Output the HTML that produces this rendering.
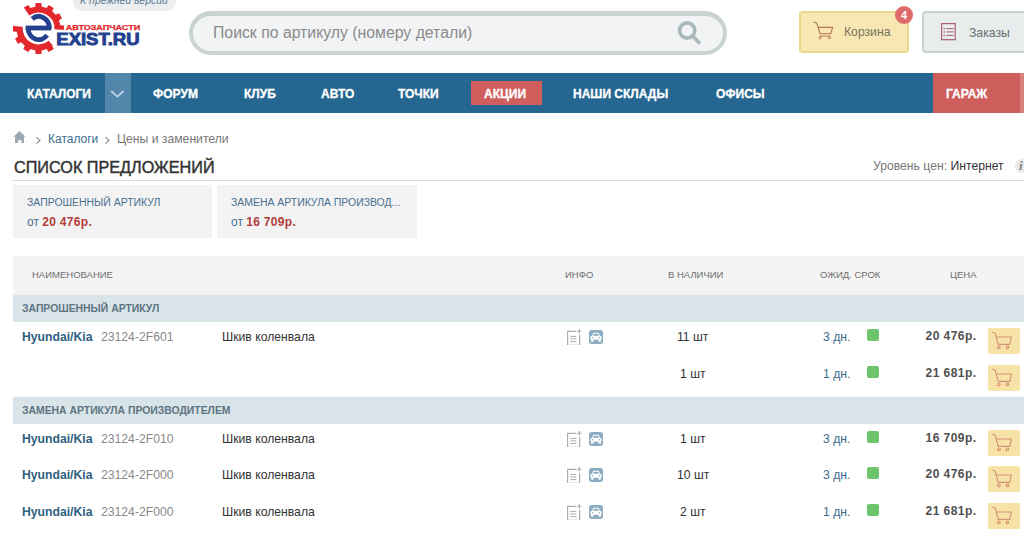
<!DOCTYPE html>
<html><head><meta charset="utf-8">
<style>
*{box-sizing:border-box;margin:0;padding:0}
html,body{width:1024px;height:550px;overflow:hidden;background:#fff;font-family:"Liberation Sans",sans-serif;position:relative}
.a{position:absolute;white-space:nowrap}
.nav{position:absolute;left:0;top:73px;width:1024px;height:40px;background:#256791}
.ni{position:absolute;top:0.5px;height:40px;line-height:40px;color:#fff;font-weight:bold;font-size:12px;-webkit-text-stroke:0.3px #fff}
.t13{font-size:13px}
.sec{position:absolute;left:13px;width:1011px;height:26.5px;background:#d9e4e8;color:#5d7482;font-weight:bold;font-size:10.4px;line-height:27px;padding-left:9px}
.brand{color:#2f5f80;font-weight:bold;font-size:12.2px}
.code{color:#888;font-size:12.2px}
.name{color:#333;font-size:12.2px}
.qty{color:#333;font-size:12.2px}
.days{color:#3d6a88;font-size:12.2px}
.gsq{position:absolute;width:12px;height:12px;background:#6cc46c;border-radius:2px}
.price{color:#505050;font-weight:bold;font-size:12px;letter-spacing:0.45px}
.cbtn{position:absolute;left:988px;width:32px;height:26px;background:#f8e3a6;border-radius:2px}
.th{color:#6e6e6e;font-size:9.5px}
</style></head><body>

<!-- old version pill -->
<div class="a" style="left:73px;top:-3px;width:103px;height:14px;background:#eceeef;border-radius:0 0 9px 9px"></div>
<div class="a" id="old" style="left:80px;top:-6px;font-size:10.5px;font-style:italic;color:#5f7f98">К прежней версии</div>

<!-- logo -->
<svg class="a" style="left:0;top:0" width="150" height="60" viewBox="0 0 150 60">
  <path d="M25.88 10.48 L23.82 7.53 L28.29 5.02 L30.44 8.03 A22.00 22.00 0 0 1 35.25 6.74 L35.60 3.06 L41.40 3.06 L41.75 6.74 A22.00 22.00 0 0 1 46.56 8.03 L48.71 5.02 L53.73 7.92 L52.20 11.28 A22.00 22.00 0 0 1 55.72 14.80 L59.08 13.27 L61.98 18.29 L58.97 20.44 A22.00 22.00 0 0 1 60.26 25.25 L63.94 25.60 L64.06 29.84 L60.47 29.65 L54.38 29.33 A15.90 15.90 0 0 0 29.38 15.48 Z M52.64 45.35 A22.00 22.00 0 0 1 52.20 45.72 L53.73 49.08 L48.71 51.98 L46.56 48.97 A22.00 22.00 0 0 1 41.75 50.26 L41.40 53.94 L35.60 53.94 L35.25 50.26 A22.00 22.00 0 0 1 30.44 48.97 L28.29 51.98 L23.27 49.08 L24.80 45.72 A22.00 22.00 0 0 1 21.28 42.20 L17.92 43.73 L15.02 38.71 L18.03 36.56 A22.00 22.00 0 0 1 16.74 31.75 L13.06 31.40 L13.04 25.82 L16.62 26.20 L22.69 26.84 A15.90 15.90 0 0 0 48.72 40.68 Z" fill="#e4262d"/>
  <path d="M32.17 18.86 A10.6 11.6 0 0 1 49.30 28.00 M28.10 28.00 A10.6 11.6 0 0 0 47.05 35.14" fill="none" stroke="#23418e" stroke-width="4.8"/>
  <rect x="25.6" y="25.6" width="25.8" height="4.8" fill="#23418e"/>
  <text x="65.7" y="29.9" font-family="Liberation Sans" font-weight="bold" font-size="7" fill="#e4262d" stroke="#e4262d" stroke-width="0.25" textLength="74.5" lengthAdjust="spacingAndGlyphs">АВТОЗАПЧАСТИ</text>
  <text x="56.3" y="44.7" font-family="Liberation Sans" font-weight="bold" font-size="17" fill="#23418e" stroke="#23418e" stroke-width="0.9" textLength="83.3" lengthAdjust="spacingAndGlyphs">EXIST.RU</text>
</svg>

<!-- search -->
<div class="a" style="left:189px;top:11px;width:538px;height:44px;border:4px solid #c9d3d2;border-top-width:5px;border-radius:22px;background:#f2f3f5"></div>
<div class="a" id="srch" style="left:213px;top:24.3px;font-size:15.8px;color:#8a8a8a">Поиск по артикулу (номеру детали)</div>
<svg class="a" style="left:670px;top:14px" width="40" height="40" viewBox="0 0 40 40">
  <circle cx="17.2" cy="16.5" r="7.6" fill="none" stroke="#a9b9b9" stroke-width="3.6"/>
  <line x1="22.5" y1="22" x2="29" y2="28.5" stroke="#a9b9b9" stroke-width="3.6" stroke-linecap="round"/>
</svg>

<!-- cart button -->
<div class="a" style="left:799px;top:11px;width:110px;height:42px;border:2px solid #ebd78c;border-radius:4px;background:#f9e7b3"></div>
<svg class="a" style="left:812px;top:20px" width="24" height="22" viewBox="0 0 24 22">
  <path d="M2.1 2.4 Q4.4 2.2 5.1 3.9 L8.1 13.8 H18.6 L20.7 7.4 H6.4" fill="none" stroke="#b5704f" stroke-width="1.1" stroke-linejoin="round" stroke-linecap="round"/>
  <path d="M8.2 16 H17.6" stroke="#b5704f" stroke-width="0.9"/>
  <circle cx="8.1" cy="17.6" r="1.2" fill="none" stroke="#b5704f" stroke-width="0.95"/>
  <circle cx="17.4" cy="17.6" r="1.2" fill="none" stroke="#b5704f" stroke-width="0.95"/>
</svg>
<div class="a" id="korz" style="left:844px;top:25px;font-size:12.2px;color:#77735f">Корзина</div>
<div class="a" style="left:895px;top:6px;width:18px;height:18px;border-radius:50%;background:#df6a6a;color:#fff;font-weight:bold;font-size:11px;text-align:center;line-height:18px">4</div>

<!-- orders button -->
<div class="a" style="left:922px;top:11px;width:130px;height:42px;border:2px solid #c9d0d0;border-radius:4px;background:#e8eced"></div>
<svg class="a" style="left:940px;top:22px" width="18" height="19" viewBox="0 0 18 19">
  <rect x="1.6" y="1.6" width="13.6" height="16.1" fill="none" stroke="#a8616b" stroke-width="1.2"/>
  <rect x="3.6" y="6" width="1.3" height="1.3" fill="#8a5a60"/><rect x="3.6" y="9.3" width="1.3" height="1.3" fill="#8a5a60"/><rect x="3.6" y="12.8" width="1.3" height="1.3" fill="#8a5a60"/>
  <path d="M6.3 6.6H13.6M6.3 9.9H13.6M6.3 13.4H13.6" stroke="#a8616b" stroke-width="1"/>
</svg>
<div class="a" id="zak" style="left:969px;top:26px;font-size:12.2px;color:#6a6f72">Заказы</div>

<!-- nav -->
<div class="nav">
  <div class="ni" id="n1" style="left:27px">КАТАЛОГИ</div>
  <div class="a" style="left:105px;top:0;width:26px;height:40px;background:#5386ab"></div>
  <svg class="a" style="left:109.5px;top:16px" width="16" height="10" viewBox="0 0 16 10"><path d="M1.2 2 L7.4 7.6 L13.6 2" fill="none" stroke="#c0d5e7" stroke-width="1.8"/></svg>
  <div class="ni" id="n2" style="left:153px">ФОРУМ</div>
  <div class="ni" id="n3" style="left:244px">КЛУБ</div>
  <div class="ni" id="n4" style="left:321px">АВТО</div>
  <div class="ni" id="n5" style="left:398px">ТОЧКИ</div>
  <div class="a" style="left:471px;top:8px;width:71px;height:24px;background:#cf5e5d"></div>
  <div class="ni" id="n6" style="left:484px">АКЦИИ</div>
  <div class="ni" id="n7" style="left:573px">НАШИ СКЛАДЫ</div>
  <div class="ni" id="n8" style="left:716px">ОФИСЫ</div>
  <div class="a" style="left:933px;top:0;width:87px;height:40px;background:#ce5e5c"></div>
  <div class="a" style="left:1020px;top:0;width:4px;height:40px;background:#d9807c"></div>
  <div class="ni" id="n9" style="left:946px">ГАРАЖ</div>
</div>


<svg width="0" height="0" style="position:absolute">
<defs>
 <g id="doc">
  <path d="M10.3 3.3 H1.6 V17.4 H13.6 V6.8" fill="none" stroke="#acacac" stroke-width="1.2"/>
  <path d="M4.2 8.4H10.4M4.2 10.9H10.4M4.2 13.6H10.4" stroke="#acacac" stroke-width="1"/>
  <path d="M13.3 1V5.4M11.1 3.2H15.5" stroke="#acacac" stroke-width="1.1"/>
 </g>
 <g id="car">
  <rect x="0" y="0" width="14" height="14" rx="3" fill="#8aabc0"/>
  <path d="M2.9 6.5 L4.2 2.7 H9.8 L11.1 6.5 Z" fill="#fff"/>
  <path d="M4.2 5.7 L4.9 3.8 H9.1 L9.8 5.7 Z" fill="#8aabc0"/>
  <rect x="1.3" y="6" width="11.4" height="3.8" rx="1" fill="#fff"/>
  <circle cx="3.6" cy="7.8" r="0.75" fill="#8aabc0"/><circle cx="10.4" cy="7.8" r="0.75" fill="#8aabc0"/>
  <rect x="2.1" y="9.3" width="2.4" height="2.3" fill="#fff"/><rect x="9.5" y="9.3" width="2.4" height="2.3" fill="#fff"/>
 </g>
 <g id="cart">
  <path d="M4.3 4.2 Q6.6 4.2 7.3 5.6 L10.2 16.4 H21.8 L23.4 9 H8.6" fill="none" stroke="#d39176" stroke-width="1.15" stroke-linejoin="round" stroke-linecap="round"/>
  <circle cx="10.9" cy="19.3" r="1.35" fill="none" stroke="#d39176" stroke-width="1.1"/>
  <circle cx="19.4" cy="19.3" r="1.35" fill="none" stroke="#d39176" stroke-width="1.1"/>
 </g>
</defs></svg>

<!-- breadcrumb -->
<svg class="a" style="left:13px;top:131px" width="13" height="12" viewBox="0 0 13 12">
  <path d="M6.5 0 L0.4 5.8 H2 V12 H5 V9.3 H8.5 V12 H11 V5.8 H12.6 Z" fill="#9daab5"/>
</svg>
<svg class="a" style="left:35px;top:136px" width="7" height="9" viewBox="0 0 7 9"><path d="M1.4 1.2 L5 4.4 L1.4 7.6" fill="none" stroke="#8a8a8a" stroke-width="1.1"/></svg>
<div class="a" id="bc2" style="left:48px;top:132px;font-size:12px;color:#3d6f91">Каталоги</div>
<svg class="a" style="left:104px;top:136px" width="7" height="9" viewBox="0 0 7 9"><path d="M1.4 1.2 L5 4.4 L1.4 7.6" fill="none" stroke="#8a8a8a" stroke-width="1.1"/></svg>
<div class="a" id="bc4" style="left:117px;top:131.5px;font-size:12.2px;color:#777">Цены и заменители</div>

<div class="a" id="title" style="left:14px;top:157.8px;font-size:16.2px;-webkit-text-stroke:0.45px #333;color:#333">СПИСОК ПРЕДЛОЖЕНИЙ</div>
<div class="a" id="lvl" style="left:873px;top:158.5px;font-size:12.2px;color:#777">Уровень цен: <span style="color:#333">Интернет</span></div>
<div class="a" style="left:1015px;top:158.5px;width:14px;height:14px;border-radius:50%;background:#e9e9e9;color:#808080;font-style:italic;font-weight:bold;font-family:'Liberation Serif',serif;font-size:13px;line-height:14px;padding-left:4px">i</div>
<div class="a" style="left:13px;top:180px;width:1011px;height:1px;background:#dcdcdc"></div>

<!-- cards -->
<div class="a" style="left:13px;top:185px;width:199px;height:53px;background:#f3f3f3"></div>
<div class="a" id="c1t" style="left:27px;top:197px;font-size:10.45px;color:#4a7090">ЗАПРОШЕННЫЙ АРТИКУЛ</div>
<div class="a" id="c1p" style="left:27px;top:214.5px;font-size:12px;color:#4a7090">от <b style="color:#b23b3b;letter-spacing:0.3px">20 476р.</b></div>
<div class="a" style="left:217px;top:185px;width:200px;height:53px;background:#f3f3f3"></div>
<div class="a" id="c2t" style="left:231px;top:197px;font-size:10.45px;color:#4a7090">ЗАМЕНА АРТИКУЛА ПРОИЗВОД...</div>
<div class="a" id="c2p" style="left:231px;top:214.5px;font-size:12px;color:#4a7090">от <b style="color:#b23b3b;letter-spacing:0.3px">16 709р.</b></div>

<!-- table header -->
<div class="a" style="left:13px;top:256px;width:1011px;height:39px;background:#f4f4f4"></div>
<div class="a th" id="h1" style="left:32px;top:269px">НАИМЕНОВАНИЕ</div>
<div class="a th" id="h2" style="left:565px;top:269px">ИНФО</div>
<div class="a th" id="h3" style="left:668px;top:269px">В НАЛИЧИИ</div>
<div class="a th" id="h4" style="left:820px;top:269px">ОЖИД. СРОК</div>
<div class="a th" id="h5" style="left:950px;top:269px">ЦЕНА</div>

<div class="sec" style="top:295px">ЗАПРОШЕННЫЙ АРТИКУЛ</div>
<div class="a brand" style="left:22px;top:330px">Hyundai/Kia</div>
<div class="a code" style="left:101px;top:330px">23124-2F601</div>
<div class="a name" style="left:222px;top:330px">Шкив коленвала</div>
<svg class="a" style="left:566px;top:328px" width="16" height="17" viewBox="0 0 16 17"><use href="#doc"/></svg>
<svg class="a" style="left:589px;top:330px" width="15" height="15" viewBox="0 0 15 15"><use href="#car"/></svg>
<div class="a qty" style="left:677px;top:330px">11 шт</div>
<div class="a days" style="left:823px;top:330px">3 дн.</div>
<div class="gsq" style="left:867px;top:329px"></div>
<div class="a price" style="right:47.5px;top:328.7px">20 476р.</div>
<div class="cbtn" style="top:328px"><svg width="32" height="26" viewBox="0 0 32 26"><use href="#cart"/></svg></div>
<div class="a qty" style="left:680px;top:367px">1 шт</div>
<div class="a days" style="left:823px;top:367px">1 дн.</div>
<div class="gsq" style="left:867px;top:366px"></div>
<div class="a price" style="right:47.5px;top:365.7px">21 681р.</div>
<div class="cbtn" style="top:365px"><svg width="32" height="26" viewBox="0 0 32 26"><use href="#cart"/></svg></div>
<div class="sec" style="top:397px">ЗАМЕНА АРТИКУЛА ПРОИЗВОДИТЕЛЕМ</div>
<div class="a brand" style="left:22px;top:432px">Hyundai/Kia</div>
<div class="a code" style="left:101px;top:432px">23124-2F010</div>
<div class="a name" style="left:222px;top:432px">Шкив коленвала</div>
<svg class="a" style="left:566px;top:430px" width="16" height="17" viewBox="0 0 16 17"><use href="#doc"/></svg>
<svg class="a" style="left:589px;top:432px" width="15" height="15" viewBox="0 0 15 15"><use href="#car"/></svg>
<div class="a qty" style="left:680px;top:432px">1 шт</div>
<div class="a days" style="left:823px;top:432px">3 дн.</div>
<div class="gsq" style="left:867px;top:431px"></div>
<div class="a price" style="right:47.5px;top:430.7px">16 709р.</div>
<div class="cbtn" style="top:430px"><svg width="32" height="26" viewBox="0 0 32 26"><use href="#cart"/></svg></div>
<div class="a brand" style="left:22px;top:468px">Hyundai/Kia</div>
<div class="a code" style="left:101px;top:468px">23124-2F000</div>
<div class="a name" style="left:222px;top:468px">Шкив коленвала</div>
<svg class="a" style="left:566px;top:466px" width="16" height="17" viewBox="0 0 16 17"><use href="#doc"/></svg>
<svg class="a" style="left:589px;top:468px" width="15" height="15" viewBox="0 0 15 15"><use href="#car"/></svg>
<div class="a qty" style="left:677px;top:468px">10 шт</div>
<div class="a days" style="left:823px;top:468px">3 дн.</div>
<div class="gsq" style="left:867px;top:467px"></div>
<div class="a price" style="right:47.5px;top:466.7px">20 476р.</div>
<div class="cbtn" style="top:466px"><svg width="32" height="26" viewBox="0 0 32 26"><use href="#cart"/></svg></div>
<div class="a brand" style="left:22px;top:505px">Hyundai/Kia</div>
<div class="a code" style="left:101px;top:505px">23124-2F000</div>
<div class="a name" style="left:222px;top:505px">Шкив коленвала</div>
<svg class="a" style="left:566px;top:503px" width="16" height="17" viewBox="0 0 16 17"><use href="#doc"/></svg>
<svg class="a" style="left:589px;top:505px" width="15" height="15" viewBox="0 0 15 15"><use href="#car"/></svg>
<div class="a qty" style="left:680px;top:505px">2 шт</div>
<div class="a days" style="left:823px;top:505px">1 дн.</div>
<div class="gsq" style="left:867px;top:504px"></div>
<div class="a price" style="right:47.5px;top:503.7px">21 681р.</div>
<div class="cbtn" style="top:503px"><svg width="32" height="26" viewBox="0 0 32 26"><use href="#cart"/></svg></div>
</body></html>
